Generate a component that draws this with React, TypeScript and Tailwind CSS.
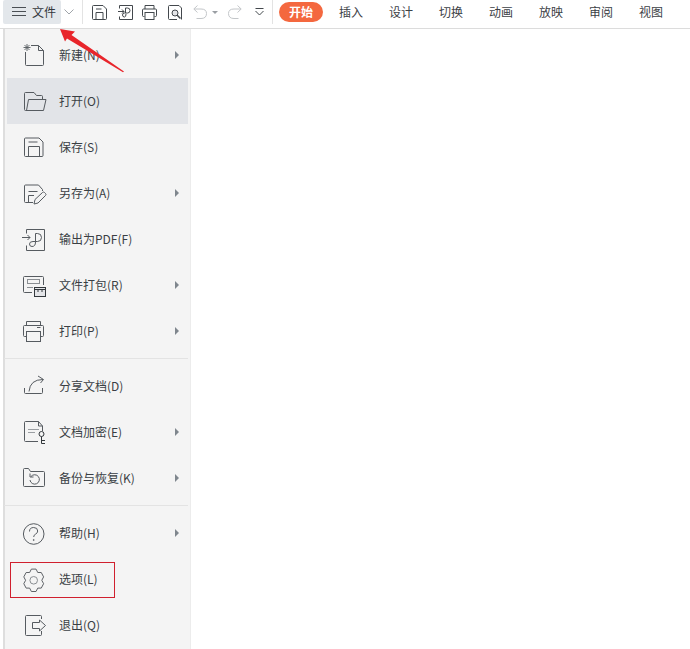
import React from "react";

const S = (p: { children: React.ReactNode }) => (
  <svg width={32} height={32} viewBox="0 0 32 32" fill="none" stroke="#565b60" strokeWidth={1} className="block shrink-0">
    {p.children}
  </svg>
);

const icons: Record<string, React.ReactNode> = {
  new: (
    <S>
      <path d="M13 6.5H20.5L25.5 11.5V25.5Q25.5 26.5 24.5 26.5H8.5Q7.5 26.5 7.5 25.5V13" />
      <path d="M20.5 6.5V11.5H25.5" />
      <path d="M5.5 8.5H12.5M9 5V12M6.5 6L11.5 11M11.5 6L6.5 11" strokeWidth={0.9} />
    </S>
  ),
  open: (
    <S>
      <path d="M9 25.5H7.5Q6.5 25.5 6.5 24.5V8.5Q6.5 7.5 7.5 7.5H16L18.5 10.5H23.5Q24.5 10.5 24.5 11.5V14" />
      <path d="M10.5 14.5H28L25.5 25.5H8.5Z" strokeLinejoin="round" />
    </S>
  ),
  save: (
    <S>
      <path d="M6.5 8Q6.5 7 7.5 7H21L25 11V24.5Q25 25.5 24 25.5H7.5Q6.5 25.5 6.5 24.5Z" />
      <path d="M10.5 25V15.5H21.5V25M10.5 11H19.5" />
    </S>
  ),
  saveas: (
    <S>
      <path d="M15 25.5H7.5Q6.5 25.5 6.5 24.5V9Q6.5 8 7.5 8H20.5L24.5 12.5V14" />
      <path d="M10.5 25V18.5H16M10.5 14.5H19.5" />
      <path d="M16 27L17 22.5L24.5 15.5Q25.5 14.5 26.5 15.5L27.5 16.5Q28.5 17.5 27.5 18.5L20 26Z" strokeLinejoin="round" />
    </S>
  ),
  pdf: (
    <S>
      <path d="M8.5 10.5V6.5H26.5V27.5H8.5V22.5" />
      <path d="M4 14.5H12M9.5 12L12 14.5L9.5 17" />
      <path d="M17.5 18V10.5H19.5Q23.5 10.5 23.5 14.5Q23.5 18.5 19.5 18.5H15Q11.5 18.5 11.5 21Q11.5 23.5 14 23.5Q17.5 23.5 17.5 19" />
    </S>
  ),
  pack: (
    <S>
      <path d="M14 23.5H6.5Q5.5 23.5 5.5 22.5V8.5Q5.5 7.5 6.5 7.5H24.5Q25.5 7.5 25.5 8.5V16" />
      <rect x="9.5" y="10.5" width="12" height="4" stroke="#8a8e92" />
      <path d="M9 18.5H15" stroke="#8a8e92" />
      <rect x="16.5" y="18.5" width="11" height="9" fill="#e4e5e8" stroke="#33383c" />
      <path d="M16.5 20.5H27.5M20 20.5V23M24 20.5V23" stroke="#33383c" />
    </S>
  ),
  print: (
    <S>
      <path d="M8.5 10V6.5H22.5V10" />
      <path d="M8 21.5H6.5Q5.5 21.5 5.5 20.5V11.5Q5.5 10.5 6.5 10.5H24.5Q25.5 10.5 25.5 11.5V20.5Q25.5 21.5 24.5 21.5H23" />
      <rect x="8.5" y="16.5" width="14" height="10" />
      <path d="M19 12.5H22.5" />
    </S>
  ),
  share: (
    <S>
      <path d="M11 21.5Q12 9.5 25 9.5" />
      <path d="M20 6L25.5 9.5L22.5 13" />
      <path d="M6.5 18V22.5Q6.5 23.5 7.5 23.5H23.5Q24.5 23.5 24.5 22.5V18" />
    </S>
  ),
  encrypt: (
    <S>
      <path d="M20 25.5H7.5Q6.5 25.5 6.5 24.5V6.5Q6.5 5.5 7.5 5.5H20.5L24.5 10V15" />
      <path d="M20.5 5.5V10H24.5" />
      <path d="M10 13.5H21M10 16.5H17" stroke="#9a9ea2" />
      <circle cx="23.5" cy="18" r="2.5" stroke="#33383c" />
      <path d="M23.5 20.5V27.5H27M23.5 24.5H27" stroke="#33383c" />
    </S>
  ),
  backup: (
    <S>
      <path d="M5.5 7.5V23.5Q5.5 24.5 6.5 24.5H25.5Q26.5 24.5 26.5 23.5V10.5Q26.5 9.5 25.5 9.5H12.5L10.5 6.5H6.5Q5.5 6.5 5.5 7.5Z" />
      <path d="M13 14.5A4.7 4.7 0 1 1 12 18" />
      <path d="M12 11.5V15H15.5" />
    </S>
  ),
  help: (
    <S>
      <circle cx="15.7" cy="17" r="10.3" />
      <path d="M11.5 14.5Q11.5 10.5 15.7 10.5Q19.7 10.5 19.7 14Q19.7 16 17.7 17Q15.7 18 15.7 20" />
      <circle cx="15.7" cy="23" r="0.5" />
    </S>
  ),
  options: (
    <S>
      <path
        d="M13.1 6.1H18.3L20.2 9.5L24.1 9.5L26.7 13.9L24.7 17.3L26.7 20.7L24.1 25.1L20.2 25.1L18.3 28.5H13.1L11.2 25.1L7.3 25.1L4.7 20.7L6.7 17.3L4.7 13.9L7.3 9.5L11.2 9.5Z"
        strokeLinejoin="round"
        transform="translate(1.57 0) scale(.9 1)"
      />
      <circle cx="15.7" cy="17.3" r="3.8" stroke="#8a8e92" />
    </S>
  ),
  exit: (
    <S>
      <path d="M23.5 10V7.5Q23.5 6.5 22.5 6.5H8.5Q7.5 6.5 7.5 7.5V25.5Q7.5 26.5 8.5 26.5H22.5Q23.5 26.5 23.5 25.5V22" />
      <path d="M14.5 13.5H21.5V11L27.5 16.5L21.5 22V19.5H14.5Z" strokeLinejoin="round" />
    </S>
  ),
};

type Item = { icon: string; label: string; arrow?: boolean; active?: boolean };
const g1: Item[] = [
  { icon: "new", label: "新建(N)", arrow: true },
  { icon: "open", label: "打开(O)", active: true },
  { icon: "save", label: "保存(S)" },
  { icon: "saveas", label: "另存为(A)", arrow: true },
  { icon: "pdf", label: "输出为PDF(F)" },
  { icon: "pack", label: "文件打包(R)", arrow: true },
  { icon: "print", label: "打印(P)", arrow: true },
];
const g2: Item[] = [
  { icon: "share", label: "分享文档(D)" },
  { icon: "encrypt", label: "文档加密(E)", arrow: true },
  { icon: "backup", label: "备份与恢复(K)", arrow: true },
];
const g3: Item[] = [
  { icon: "help", label: "帮助(H)", arrow: true },
  { icon: "options", label: "选项(L)" },
  { icon: "exit", label: "退出(Q)" },
];

const Row = ({ it }: { it: Item }) => (
  <div className={`flex h-[46px] items-center pl-[11px] pr-[9px] ${it.active ? "bg-[#e2e4e8]" : ""}`}>
    <div className="w-[41px]">{icons[it.icon]}</div>
    <span className="flex-1 text-[12px] text-[#3a3f44]">{it.label}</span>
    {it.arrow && <span className="h-0 w-0 border-y-[4px] border-l-[4px] border-y-transparent border-l-[#7f868d]" />}
  </div>
);

const Sep = () => (
  <div className="flex h-[9px] items-center">
    <div className="-ml-[3px] h-px w-[184px] bg-[#e3e3e3]" />
  </div>
);

const tabs = ["插入", "设计", "切换", "动画", "放映", "审阅", "视图"];

export default function App() {
  return (
    <div className="relative h-[649px] w-[690px] overflow-hidden bg-white [font-family:'Noto_Sans_CJK_SC','Liberation_Sans',sans-serif]">
      <header className="flex h-[29px] items-start border-b border-[#dcdcdc] pl-[3px]">
        <div className="flex h-[24px] w-[58px] items-center gap-[6px] rounded-[2px] bg-[#e3e7eb] pl-[9px]">
          <svg width="14" height="10" viewBox="0 0 14 10" stroke="#4a4f54" className="block">
            <path d="M0 .5H14M0 4.5H14M0 8.5H14" />
          </svg>
          <span className="text-[12px] text-[#33383c]">文件</span>
        </div>
        <div className="flex h-[24px] w-[21px] items-center pl-[3px]">
          <svg width="10" height="6" viewBox="0 0 10 6" stroke="#a0a5aa" fill="none" className="block"><path d="M.5.5L5 5L9.5.5" /></svg>
        </div>
        <div className="h-[24px] w-px bg-[#e3e3e3]" />
        <div className="flex h-[24px] items-center pl-[9px]">
          <svg width="15" height="15" viewBox="0 0 15 15" fill="none" stroke="#43484d" className="block">
            <path d="M.5 1.5Q.5.5 1.5.5H11L14.5 4V13.5Q14.5 14.5 13.5 14.5H1.5Q.5 14.5.5 13.5Z" />
            <path d="M4 14.5V7.5H11V14.5M4 4H9.5" />
          </svg>
          <svg width="15" height="15" viewBox="0 0 15 15" fill="none" stroke="#43484d" className="ml-[11px] block">
            <path d="M1.5 3.5V.5H14.5V14.5H1.5V11.5" />
            <path d="M-1 7.5H5M3 5.5L5 7.5L3 9.5" transform="translate(1 -1)" />
            <path d="M7.5 8V3H9.5Q12 3 12 5.5Q12 8 9.5 8H6.5Q4.5 8 4.5 10Q4.5 12 6.5 12Q8 12 8 9" />
          </svg>
          <svg width="15" height="15" viewBox="0 0 15 15" fill="none" stroke="#43484d" className="ml-[9px] block">
            <path d="M3 4V.5H12V4" />
            <path d="M2.5 11.5H1.5Q.5 11.5.5 10.5V5Q.5 4 1.5 4H13.5Q14.5 4 14.5 5V10.5Q14.5 11.5 13.5 11.5H12.5" />
            <rect x="3" y="7.5" width="9" height="7" />
          </svg>
          <svg width="14" height="15" viewBox="0 0 14 15" fill="none" stroke="#43484d" className="ml-[11px] block">
            <path d="M13.5 14.5V3L11 .5H1.5Q.5.5.5 1.5V13.5Q.5 14.5 1.5 14.5H9" />
            <circle cx="7" cy="8" r="3" fill="#e4e5e8" />
            <path d="M9 10L12.5 13.5" strokeWidth="1.5" />
          </svg>
          <svg width="14" height="14" viewBox="0 0 14 14" fill="none" stroke="#c3c6c9" className="ml-[11px] block">
            <path d="M4.5.5L.8 4L4.5 7.5M1 4H8Q13.5 4 13.5 8.5Q13.5 13.5 8 13.5H3.5" />
          </svg>
          <span className="ml-[5px] h-0 w-0 border-x-[3px] border-t-[3px] border-x-transparent border-t-[#9a9ea3]" />
          <svg width="14" height="14" viewBox="0 0 14 14" fill="none" stroke="#c3c6c9" className="ml-[10px] block">
            <path d="M9.5.5L13.2 4L9.5 7.5M13 4H6Q.5 4 .5 8.5Q.5 13.5 6 13.5H10.5" />
          </svg>
          <svg width="9" height="8" viewBox="0 0 9 8" fill="none" stroke="#43484d" className="ml-[13px] block">
            <path d="M.5.5H8.5M.5 3L4.5 7L8.5 3" />
          </svg>
        </div>
        <div className="ml-[8px] h-[24px] w-px bg-[#e3e3e3]" />
        <div className="flex pt-[2px]">
          <div className="ml-[6px] flex h-[20px] w-[44px] items-center justify-center rounded-full bg-[#f4683f] text-[12px] font-bold text-white">开始</div>
          <div className="ml-[3px] flex">
            {tabs.map((t) => (
              <div key={t} className="flex h-[20px] w-[50px] items-center justify-center text-[12px] text-[#3c4146]">{t}</div>
            ))}
          </div>
        </div>
      </header>

      <nav className="ml-[3px] h-[620px] w-[188px] border-l-2 border-r border-l-[#dedede] border-r-[#ececec] bg-[#f4f4f4] pl-[2px] pr-[2px] pt-[3px]">
        {g1.map((it) => <Row key={it.icon} it={it} />)}
        <Sep />
        {g2.map((it) => <Row key={it.icon} it={it} />)}
        <Sep />
        {g3.map((it) => <Row key={it.icon} it={it} />)}
      </nav>

      <div className="absolute left-[10px] top-[562px] h-[36px] w-[105px] border border-[#d0202e]" />

      <svg width="80" height="60" viewBox="0 0 80 60" className="absolute left-[55px] top-[22px] block">
        <path d="M5 7L20 9.5L16.5 13L69 49.5L68 50.2L12 16.5L10 19.5Z" fill="#e8252b" />
      </svg>
    </div>
  );
}
